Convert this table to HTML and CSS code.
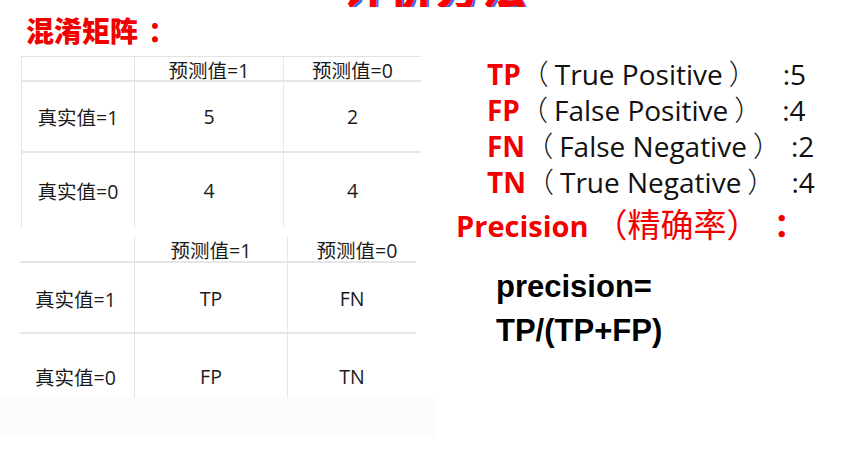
FILE: index.html
```html
<!DOCTYPE html>
<html lang="zh">
<head>
<meta charset="utf-8">
<link rel="stylesheet" href="styles.css">
</head>
<body>
<div class="page">
  <div class="top-title"><span>评价方法</span></div>
  <div class="cols">
    <div class="left">
      <div class="heading">混淆矩阵<span class="colon">：</span></div>
      <div class="table t1">
        <div class="cell h c1"></div>
        <div class="cell h c2">预测值=1</div>
        <div class="cell h c3">预测值=0</div>
        <div class="cell r1 c1">真实值=1</div>
        <div class="cell r1 c2">5</div>
        <div class="cell r1 c3">2</div>
        <div class="cell r2 c1">真实值=0</div>
        <div class="cell r2 c2">4</div>
        <div class="cell r2 c3">4</div>
      </div>
      <div class="table t2">
        <div class="cell h c1"></div>
        <div class="cell h c2">预测值=1</div>
        <div class="cell h c3">预测值=0</div>
        <div class="cell r1 c1">真实值=1</div>
        <div class="cell r1 c2">TP</div>
        <div class="cell r1 c3">FN</div>
        <div class="cell r2 c1">真实值=0</div>
        <div class="cell r2 c2">FP</div>
        <div class="cell r2 c3">TN</div>
      </div>
      <div class="shade"></div>
    </div>
    <div class="right">
      <div class="defs">
        <div class="def"><b>TP</b><span class="p">（</span><span class="t">True Positive</span><span class="p">）</span><span class="v v1">:5</span></div>
        <div class="def"><b>FP</b><span class="p">（</span><span class="t">False Positive</span><span class="p">）</span><span class="v v2">:4</span></div>
        <div class="def"><b>FN</b><span class="p">（</span><span class="t">False Negative</span><span class="p">）</span><span class="v v3">:2</span></div>
        <div class="def"><b>TN</b><span class="p">（</span><span class="t">True Negative</span><span class="p">）</span><span class="v v4">:4</span></div>
      </div>
      <div class="prec"><b>Precision</b>（精确率）<span class="pc">：</span></div>
      <div class="formula">precision=<br>TP/(TP+FP)</div>
    </div>
  </div>
</div>
</body>
</html>
```

FILE: styles.css
```css
html, body {
  margin: 0;
  padding: 0;
  background: #fff;
}
body {
  width: 846px;
  height: 459px;
  overflow: hidden;
  font-family: "Open Sans", "Noto Sans CJK SC", sans-serif;
  color: #111;
}
.top-title {
  height: 7px;
  overflow: hidden;
  display: flex;
  align-items: flex-end;
  padding-left: 344px;
}
.top-title span {
  display: block;
  font-family: "Noto Sans CJK SC", sans-serif;
  font-weight: 900;
  font-size: 44px;
  line-height: 44px;
  color: #f00;
  text-shadow: 2px 2px 0 #3b6ee8;
  margin-bottom: -1px;
  letter-spacing: 2px;
}
.cols {
  display: flex;
}
.left {
  width: 440px;
  flex: none;
}
.heading {
  font-family: "Noto Sans CJK SC", sans-serif;
  font-weight: 900;
  font-size: 28px;
  line-height: 36px;
  color: #f20000;
  padding-left: 26px;
  margin-top: 5px;
}
.heading .colon {
  margin-left: 10px;
}
.table {
  display: grid;
  font-family: "Open Sans", "Noto Sans CJK SC", sans-serif;
  font-size: 19.5px;
  color: #1a1a1a;
}
.cell {
  display: flex;
  align-items: center;
  justify-content: center;
}
.t1 {
  margin-left: 21px;
  margin-top: 8px;
  width: 399px;
  grid-template-columns: 113px 149px 137px;
  grid-template-rows: 25px 71px 74px;
  border-top: 1px solid #e2e2e2;
  border-left: 1px solid #e2e2e2;
}
.t1 .h { border-bottom: 2px solid #e6e6e6; padding-top: 1px; }
.t1 .r1 { border-bottom: 2px solid #e6e6e6; }
.t1 .c1 { border-right: 1px solid #e2e2e2; }
.t1 .c2 { border-right: 1px solid #e8e8e8; }
.t2 {
  margin-left: 20px;
  margin-top: 10px;
  width: 396px;
  grid-template-columns: 115px 153px 128px;
  grid-template-rows: 26px 71px 64px;
}
.t2 .h { border-bottom: 2px solid #e6e6e6; }
.t2 .r1 { border-bottom: 2px solid #e6e6e6; }
.t2 .c1 { border-right: 1px solid #e2e2e2; }
.t2 .c2 { border-right: 1px solid #e8e8e8; }
.t2 .c1.r1, .t2 .c1.r2 { padding-right: 3px; }
.t2 .r1 { padding-top: 2px; }
.t2 .r2 { padding-top: 20px; }
.t2 .h.c3 { padding-left: 10px; }
.shade {
  height: 39px;
  width: 435px;
  background: #fcfcfc;
}
.right {
  flex: 1;
}
.defs {
  margin-top: 49px;
  padding-left: 47px;
  font-size: 28px;
  line-height: 35px;
  color: #111;
}
.def {
  white-space: nowrap;
  display: flex;
  align-items: baseline;
}
.def b {
  color: #f20000;
  font-weight: 700;
}
.def .p {
  font-family: "Noto Sans CJK SC", sans-serif;
  font-weight: 300;
}
.def .t {
  margin: 0 6px 0 6px;
}
.def .v1 { margin-left: 26px; }
.def .v2 { margin-left: 20px; }
.def .v3 { margin-left: 10px; }
.def .v4 { margin-left: 16px; }
.prec {
  margin-top: 3px;
  padding-left: 16px;
  font-family: "Noto Sans CJK SC", sans-serif;
  font-size: 33px;
  line-height: 40px;
  color: #f20000;
  white-space: nowrap;
  display: flex;
  align-items: baseline;
}
.prec b {
  font-family: "Open Sans", sans-serif;
  font-weight: 700;
  font-size: 29px;
  margin-right: 6px;
}
.prec .pc {
  font-weight: 700;
  margin-left: 14px;
}
.formula {
  margin-top: 19px;
  padding-left: 56px;
  font-family: "Liberation Sans", sans-serif;
  font-weight: 700;
  font-size: 31px;
  line-height: 44px;
  color: #000;
}
```
